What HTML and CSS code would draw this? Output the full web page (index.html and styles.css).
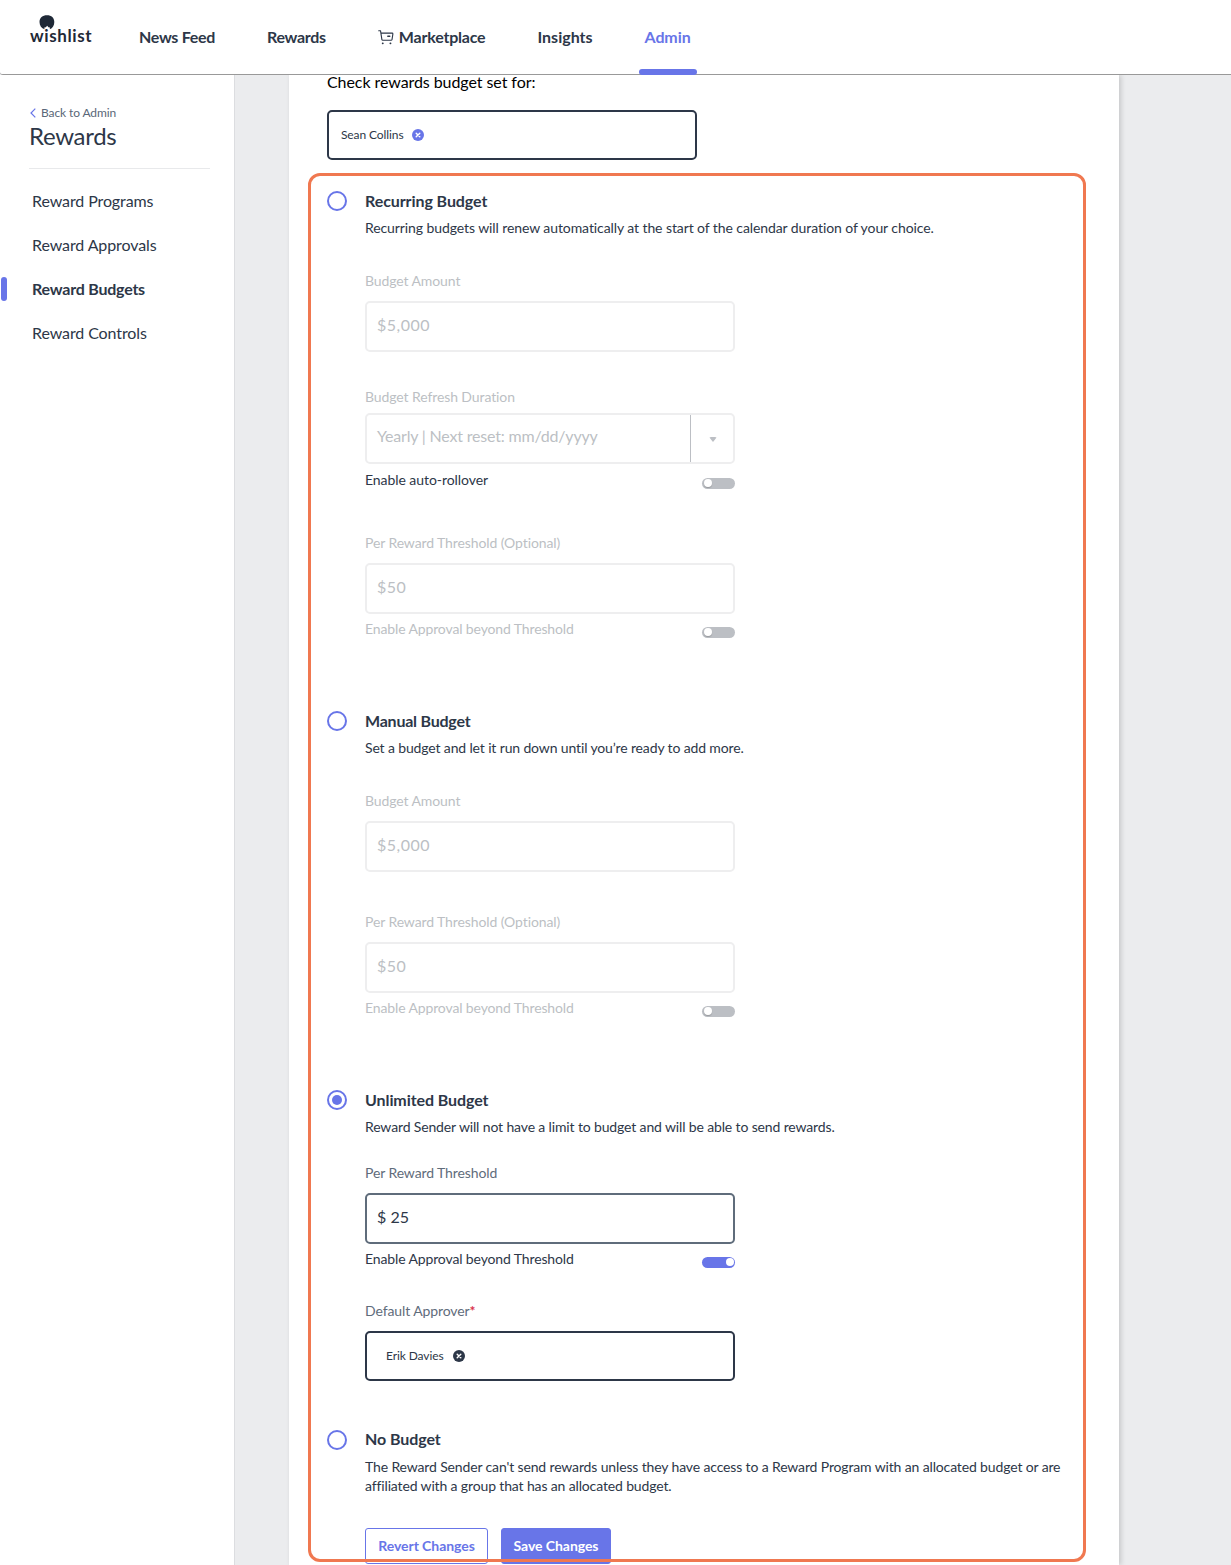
FILE: index.html
```html
<!DOCTYPE html>
<html lang="en">
<head>
    <meta charset="utf-8">
    <title>Reward Budgets</title>
    <link rel="stylesheet" href="styles.css">
</head>
<body>
<header class="header">
    <a class="logo">
        <svg class="logo-hair" width="16" height="17" viewBox="0 0 16 17">
            <path d="M8 .3C12.500.3 15.300 2.900 15.300 6.900c0 3.600-1.700 6.200-4.500 7.300L10.900 12.600 9.400 12.300 8.200 10.800 6.800 12.300 5.300 12.600 5.500 14.300C2.600 13.200.5 10.600.5 6.900.5 2.900 3.500.3 8 .3z" fill="#1f2937"/>
        </svg>
        <span class="logo-text">wishlist</span>
    </a>
    <nav class="nav">
        <a class="nav-feed">News Feed</a>
        <a class="nav-rewards">Rewards</a>
        <a class="nav-market">
            <svg width="16" height="16" viewBox="0 0 16 16" fill="none" stroke="#2d3748" stroke-width="1.100" stroke-linecap="round" stroke-linejoin="round">
                <path d="M.7 1.700h1.800l1.400 8.900c.1.500.4.600.9.600h8.300c.5 0 .8-.2.900-.6l.9-5.700c0-.5-.2-.8-.7-.8H3"/>
                <path d="M9.800 7.200h2" stroke-width="1.400"/>
                <path d="M4.600 14.400h.3M12.300 14.400h.3" stroke-width="1.600"/>
            </svg>
            <span>Marketplace</span>
        </a>
        <a class="nav-insights">Insights</a>
        <a class="nav-admin active">Admin</a>
    </nav>
</header>

<div class="page">
    <aside class="sidebar">
        <a class="back">
            <svg width="6" height="10" viewBox="0 0 6 10" fill="none" stroke="#6875e8" stroke-width="1.200">
                <path d="M5.300.6L1 5l4.300 4.400"/>
            </svg>
            <span>Back to Admin</span>
        </a>
        <h1>Rewards</h1>
        <ul class="menu">
            <li>Reward Programs</li>
            <li>Reward Approvals</li>
            <li class="current">Reward Budgets</li>
            <li>Reward Controls</li>
        </ul>
    </aside>

    <main class="panel">
        <p class="check-label">Check rewards budget set for:</p>
        <div class="input people">
            <span class="chip">Sean Collins</span>
            <svg class="remove" width="12" height="12" viewBox="0 0 12 12">
                <circle cx="6" cy="6" r="6" fill="#6875e8"/>
                <path d="M4.200 4.200l3.600 3.600M7.800 4.200L4.200 7.800" stroke="#fff" stroke-width="1.400" stroke-linecap="round"/>
            </svg>
        </div>

        <section class="option recurring">
            <span class="radio"></span>
            <div class="content">
                <h2>Recurring Budget</h2>
                <p class="desc">Recurring budgets will renew automatically at the start of the calendar duration of your choice.</p>
                <div class="field disabled">
                    <label>Budget Amount</label>
                    <div class="input">$5,000</div>
                </div>
                <div class="field disabled duration">
                    <label>Budget Refresh Duration</label>
                    <div class="input select">
                        <span class="value">Yearly | Next reset: mm/dd/yyyy</span>
                        <span class="arrow"></span>
                    </div>
                </div>
                <div class="toggle-row rollover">
                    <span>Enable auto-rollover</span>
                    <span class="toggle"></span>
                </div>
                <div class="field disabled threshold">
                    <label>Per Reward Threshold (Optional)</label>
                    <div class="input">$50</div>
                </div>
                <div class="toggle-row disabled">
                    <span>Enable Approval beyond Threshold</span>
                    <span class="toggle"></span>
                </div>
            </div>
        </section>

        <section class="option manual">
            <span class="radio"></span>
            <div class="content">
                <h2>Manual Budget</h2>
                <p class="desc">Set a budget and let it run down until you’re ready to add more.</p>
                <div class="field disabled">
                    <label>Budget Amount</label>
                    <div class="input">$5,000</div>
                </div>
                <div class="field disabled manual-threshold">
                    <label>Per Reward Threshold (Optional)</label>
                    <div class="input">$50</div>
                </div>
                <div class="toggle-row disabled">
                    <span>Enable Approval beyond Threshold</span>
                    <span class="toggle"></span>
                </div>
            </div>
        </section>

        <section class="option unlimited">
            <span class="radio checked"></span>
            <div class="content">
                <h2>Unlimited Budget</h2>
                <p class="desc">Reward Sender will not have a limit to budget and will be able to send rewards.</p>
                <div class="field">
                    <label>Per Reward Threshold</label>
                    <div class="input">$ 25</div>
                </div>
                <div class="toggle-row">
                    <span>Enable Approval beyond Threshold</span>
                    <span class="toggle on"></span>
                </div>
                <div class="field approver">
                    <label>Default Approver<span class="required">*</span></label>
                    <div class="input people">
                        <span class="chip">Erik Davies</span>
                        <svg class="remove" width="12" height="12" viewBox="0 0 12 12">
                            <circle cx="6" cy="6" r="6" fill="#2d3748"/>
                            <path d="M4.200 4.200l3.600 3.600M7.800 4.200L4.200 7.800" stroke="#fff" stroke-width="1.400" stroke-linecap="round"/>
                        </svg>
                    </div>
                </div>
            </div>
        </section>

        <section class="option none">
            <span class="radio"></span>
            <div class="content">
                <h2>No Budget</h2>
                <p class="desc">The Reward Sender can't send rewards unless they have access to a Reward Program with an allocated budget or are<br>affiliated with a group that has an allocated budget.</p>
                <div class="buttons">
                    <button class="btn revert">Revert Changes</button>
                    <button class="btn save">Save Changes</button>
                </div>
            </div>
        </section>

        <div class="highlight"></div>
    </main>
</div>
</body>
</html>
```
FILE: styles.css
```css
*,
*:before,
*:after {
    margin: 0;
    padding: 0;
    box-sizing: border-box;
}

body {
    height: 1565px;
    overflow: hidden;
    background-color: #ebecee;
    font-family: Lato, sans-serif;
    font-size: 16px;
    color: #2d3748;
    white-space: nowrap;
}

/* header */
.header {
    position: relative;
    z-index: 2;
    display: flex;
    height: 75px;
    padding-left: 30px;
    background-color: #ffffff;
    border-bottom: 1px solid #999999;
    border-bottom-left-radius: 3px;
}

.logo {
    width: 109px;
    padding-top: 15px;
    color: #1f2937;
}

.logo-hair {
    display: block;
    margin-left: 9px;
}

.logo-text {
    display: block;
    margin-top: -6px;
    font-size: 17px;
    font-weight: 700;
    line-height: 20px;
    letter-spacing: 0.6px;
}

.nav {
    display: flex;
    height: 74px;
    font-weight: 700;
    line-height: 74px;
    letter-spacing: -0.3px;
}

.nav a {
    margin-right: 52px;
}

.nav .nav-market {
    display: flex;
    align-items: center;
    gap: 5px;
    letter-spacing: -0.2px;
}

.nav .nav-insights {
    letter-spacing: 0;
}

.nav .nav-admin {
    position: relative;
    margin-right: 0;
    letter-spacing: -0.1px;
}

.nav .active {
    color: #6875e8;
}

.active:after {
    content: "";
    position: absolute;
    left: -6px;
    right: -6px;
    bottom: -1px;
    height: 6px;
    border-radius: 3px;
    background-color: #6875e8;
}

.page {
    display: flex;
    height: 1490px;
}

/* sidebar */
.sidebar {
    width: 235px;
    padding-top: 29px;
    background-color: #ffffff;
    border-right: 1px solid #dcdde0;
}

.back {
    display: flex;
    align-items: center;
    gap: 5px;
    margin-left: 30px;
    font-size: 12px;
    line-height: 18px;
    letter-spacing: -0.1px;
    color: #5a6778;
}

.sidebar h1 {
    width: 181px;
    height: 47px;
    margin-left: 29px;
    border-bottom: 1px solid #e8e9eb;
    font-size: 24px;
    font-weight: 400;
    line-height: 27px;
    letter-spacing: -0.3px;
}

.menu {
    padding-top: 10px;
    list-style: none;
}

.menu li {
    height: 44px;
    padding-left: 32px;
    line-height: 44px;
    letter-spacing: -0.1px;
}

.menu .current {
    position: relative;
    font-weight: 700;
    letter-spacing: -0.22px;
}

.menu .current:before {
    content: "";
    position: absolute;
    left: 1px;
    top: 10px;
    width: 6px;
    height: 24px;
    border-radius: 3px;
    background-color: #6875e8;
}

/* budget form */
.panel {
    position: relative;
    width: 830px;
    margin-left: 54px;
    padding-left: 38px;
    background-color: #ffffff;
    box-shadow: 2px 0 5px rgba(0, 0, 0, 0.16);
}

.check-label {
    height: 35px;
    line-height: 14px;
    letter-spacing: -0.07px;
    color: #000000;
}

.input {
    width: 370px;
    height: 51px;
    padding-left: 10px;
    border: 2px solid #5f6c7b;
    border-radius: 5px;
    line-height: 44px;
}

.input.people {
    display: flex;
    align-items: center;
    gap: 9px;
    height: 50px;
    padding-left: 12px;
    border-color: #2d3748;
    font-size: 12px;
    letter-spacing: -0.1px;
}

.option {
    display: flex;
    gap: 18px;
}

.recurring {
    height: 520px;
    margin-top: 31px;
}

.manual {
    height: 379px;
}

.unlimited {
    height: 340px;
}

.radio {
    width: 20px;
    height: 20px;
    border: 2px solid #6875e8;
    border-radius: 50%;
}

.radio.checked {
    padding: 3px;
    background-color: #6875e8;
    background-clip: content-box;
}

.option h2 {
    height: 27px;
    font-size: 16px;
    font-weight: 700;
    line-height: 20px;
    letter-spacing: -0.08px;
}

.manual h2 {
    letter-spacing: -0.22px;
}

.none h2 {
    line-height: 18px;
}

.desc {
    font-size: 14px;
    line-height: 19px;
    letter-spacing: -0.14px;
}

.recurring .desc {
    letter-spacing: -0.09px;
}

.field {
    margin-top: 35px;
}

.unlimited .field {
    margin-top: 28px;
}

.field label {
    display: block;
    height: 29px;
    font-size: 14px;
    line-height: 18px;
    letter-spacing: -0.1px;
    color: #5f6c7b;
}

.disabled,
.field.disabled label {
    color: #bcbfc4;
}

.disabled .input {
    border-color: #eeeeef;
    letter-spacing: 0.5px;
}

.field.duration {
    margin-top: 36px;
}

.duration label {
    height: 25px;
}

.field.threshold {
    margin-top: 45px;
}

.field.manual-threshold {
    margin-top: 41px;
}

.unlimited .approver {
    margin-top: 34px;
}

.approver .people {
    padding-left: 19px;
}

.disabled .select {
    display: flex;
    line-height: 42px;
    letter-spacing: -0.19px;
}

.select .value {
    flex: 1;
}

.select .arrow {
    width: 43px;
    border-left: 1px solid #bcbfc4;
}

.arrow:before {
    content: "";
    display: block;
    width: 8px;
    margin: 22px 0 0 18px;
    border: 4px solid transparent;
    border-top: 5px solid #bcbfc4;
    border-bottom: 0;
    border-radius: 2px;
}

.toggle-row {
    display: flex;
    justify-content: space-between;
    align-items: flex-end;
    width: 370px;
    padding-top: 6px;
    font-size: 14px;
    line-height: 18px;
    letter-spacing: -0.13px;
}

.rollover {
    padding-top: 7px;
    letter-spacing: -0.06px;
}

.toggle {
    width: 33px;
    height: 11px;
    padding: 1px 1px 1px 2px;
    border-radius: 6px;
    background-color: #bcbfc4;
}

.toggle:before {
    content: "";
    display: block;
    width: 8px;
    height: 8px;
    border-radius: 50%;
    background-color: #ffffff;
    box-shadow: 0 1px 1px rgba(0, 0, 0, 0.2);
}

.toggle.on {
    background-color: #6875e8;
}

.toggle.on:before {
    margin-left: auto;
    box-shadow: none;
}

.required {
    font-weight: 700;
    color: #d9304c;
}

.buttons {
    display: flex;
    gap: 13px;
    margin-top: 33px;
}

.btn {
    height: 36px;
    padding-bottom: 2px;
    border: 1px solid #6875e8;
    border-radius: 3px;
    font-family: inherit;
    font-size: 14px;
    font-weight: 700;
    letter-spacing: -0.06px;
}

.revert {
    width: 123px;
    background-color: #ffffff;
    color: #6875e8;
}

.save {
    width: 110px;
    background-color: #6875e8;
    color: #ffffff;
}

/* callout drawn over the form */
.highlight {
    position: absolute;
    left: 19px;
    top: 98px;
    width: 778px;
    height: 1389px;
    border: 3px solid #f07850;
    border-radius: 12px;
}
```
